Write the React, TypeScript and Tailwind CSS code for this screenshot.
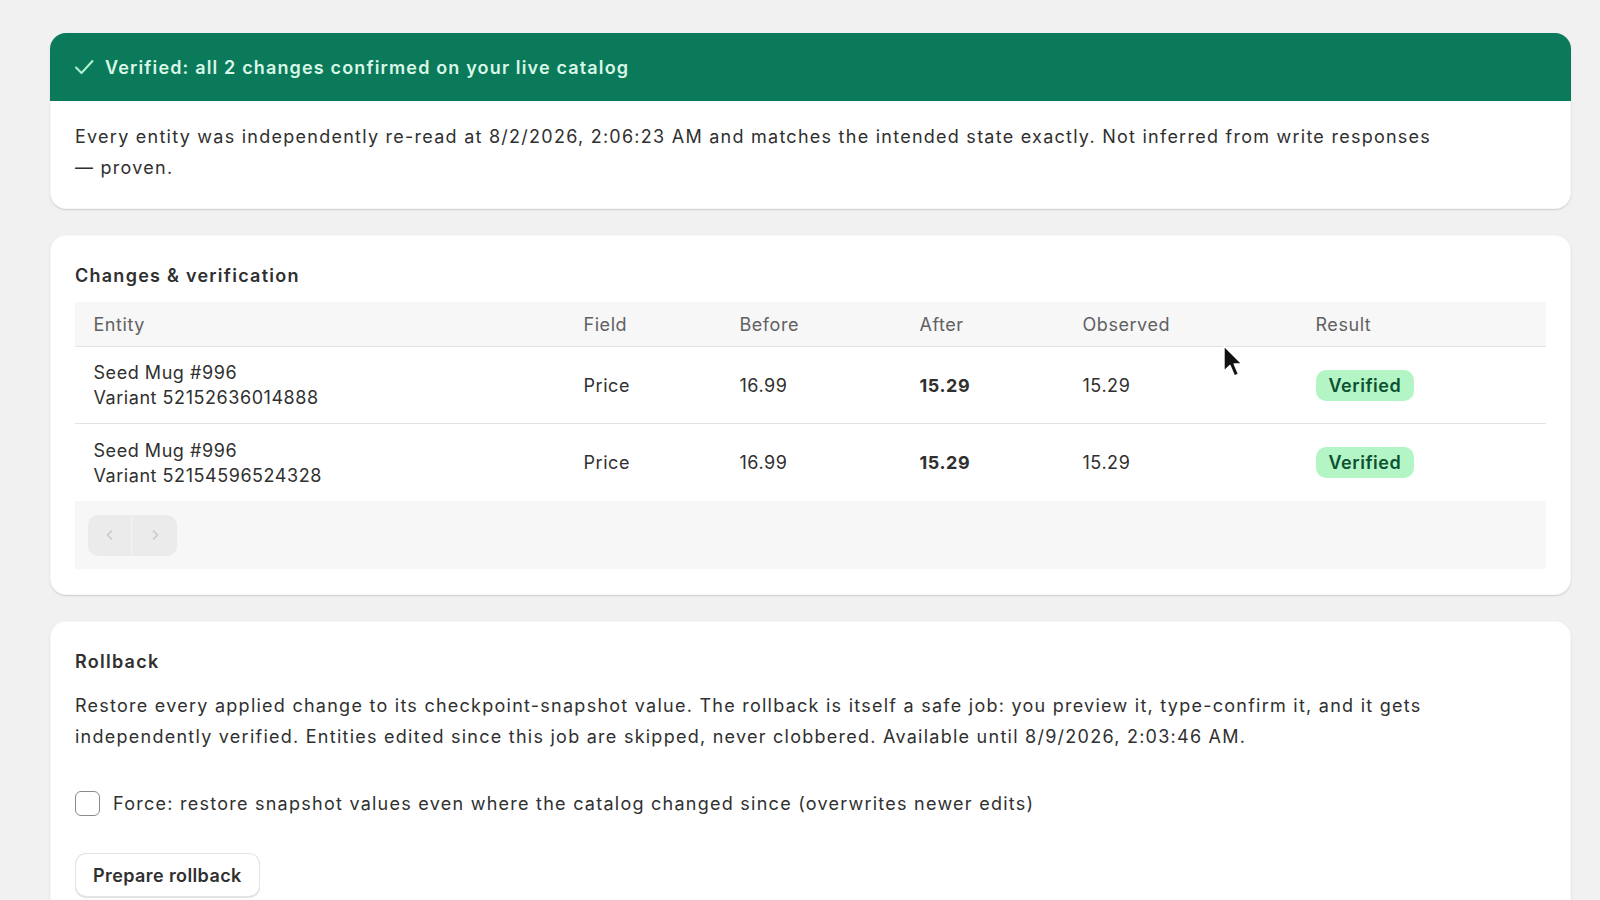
import React from "react";

type Change = {
  product: string;
  variant: string;
  field: string;
  before: string;
  after: string;
  observed: string;
};

const changes: Change[] = [
  { product: "Seed Mug #996", variant: "Variant 52152636014888", field: "Price", before: "16.99", after: "15.29", observed: "15.29" },
  { product: "Seed Mug #996", variant: "Variant 52154596524328", field: "Price", before: "16.99", after: "15.29", observed: "15.29" },
];

const cols = "grid grid-cols-[490px_156px_180px_163px_233px_1fr]";

function Card({ children, className = "" }: { children: React.ReactNode; className?: string }) {
  return (
    <div
      className={
        "rounded-[16px] bg-white shadow-[0_1px_0_rgba(26,26,26,0.09),0_1px_3px_rgba(26,26,26,0.08),inset_0_0_0_1px_rgba(0,0,0,0.03)] " +
        className
      }
    >
      {children}
    </div>
  );
}

function Pointer() {
  return (
    <svg
      className="pointer-events-none absolute left-[1222px] top-[345px]"
      width="22"
      height="34"
      viewBox="0 0 22 34"
    >
      <path
        d="M2 1 L2 26 L8 20.5 L12.5 31 L16.5 29.2 L12.2 19 L20 19 Z"
        fill="#111"
        stroke="#fff"
        strokeWidth="1.4"
        strokeLinejoin="round"
      />
    </svg>
  );
}

export default function App() {
  return (
    <div
      className="relative min-h-[900px] overflow-hidden bg-[#f1f1f1] pl-[50px] pr-[29px] pt-[33px] text-[18px] tracking-[1.25px] text-[#303030]"
      style={{ fontFamily: "Inter, 'Noto Sans', 'Liberation Sans', sans-serif" }}
    >
      <div className="flex flex-col gap-[26px]">
        {/* Verification banner */}
        <Card className="overflow-hidden">
          <div className="flex h-[68px] items-center gap-[10px] bg-[#0a7a5a] pl-[23px] text-[#d9f7e6]">
            <svg width="22" height="22" viewBox="0 0 22 22" fill="none">
              <path d="M3 11.5 L8.5 17 L19.5 5" stroke="#b5f3d0" strokeWidth="2" strokeLinecap="round" strokeLinejoin="round" />
            </svg>
            <span className="text-[18px] font-semibold leading-[31px] tracking-[1.15px]">
              Verified: all 2 changes confirmed on your live catalog
            </span>
          </div>
          <div className="px-[25px] pb-[26px] pt-[20px] leading-[31px]">
            Every entity was independently re-read at 8/2/2026, 2:06:23 AM and matches the intended state exactly. Not
            inferred from write responses
            <br />— proven.
          </div>
        </Card>

        {/* Changes table */}
        <Card className="px-[25px] pb-[26px] pt-[25px]">
          <h2 className="text-[18px] font-semibold leading-[31px]">Changes &amp; verification</h2>
          <div className="mt-[11px] overflow-hidden rounded-[2px] tracking-[0.55px]">
            <div className={cols + " h-[45px] items-center border-b border-[#e3e3e3] bg-[#f7f7f7] text-[#616161]"}>
              {["Entity", "Field", "Before", "After", "Observed", "Result"].map((h) => (
                <div key={h} className="pl-[18.5px]">
                  {h}
                </div>
              ))}
            </div>
            {changes.map((c, i) => (
              <div
                key={c.variant}
                className={
                  cols +
                  " h-[77px] items-center " +
                  (i < changes.length - 1 ? "border-b border-[#e3e3e3]" : "")
                }
              >
                <div className="pl-[18.5px] leading-[25px]">
                  <div>{c.product}</div>
                  <div>{c.variant}</div>
                </div>
                <div className="pl-[18.5px]">{c.field}</div>
                <div className="pl-[18.5px]">{c.before}</div>
                <div className="pl-[18.5px] font-bold">{c.after}</div>
                <div className="pl-[18.5px]">{c.observed}</div>
                <div className="pl-[18.5px]">
                  <span className="inline-flex h-[31px] items-center rounded-[10px] bg-[#b4f5c6] px-[13px] font-semibold text-[#0c5132]">
                    Verified
                  </span>
                </div>
              </div>
            ))}
            <div className="flex h-[68px] items-center bg-[#f7f7f7] pl-[13px]">
              <div className="flex h-[41px] overflow-hidden rounded-[10px] bg-[#ebebeb]">
                <button className="flex w-[44px] items-center justify-center border-r border-[#f3f3f3] text-[#c8c8c8]">
                  <svg width="14" height="14" viewBox="0 0 14 14" fill="none">
                    <path d="M8.5 3 L4.5 7 L8.5 11" stroke="currentColor" strokeWidth="1.6" strokeLinecap="round" strokeLinejoin="round" />
                  </svg>
                </button>
                <button className="flex w-[45px] items-center justify-center text-[#c8c8c8]">
                  <svg width="14" height="14" viewBox="0 0 14 14" fill="none">
                    <path d="M5.5 3 L9.5 7 L5.5 11" stroke="currentColor" strokeWidth="1.6" strokeLinecap="round" strokeLinejoin="round" />
                  </svg>
                </button>
              </div>
            </div>
          </div>
        </Card>

        {/* Rollback */}
        <Card className="px-[25px] pb-[30px] pt-[25px]">
          <h2 className="text-[18px] font-semibold leading-[31px]">Rollback</h2>
          <p className="mt-[13px] leading-[31px]">
            Restore every applied change to its checkpoint-snapshot value. The rollback is itself a safe job: you preview
            it, type-confirm it, and it gets
            <br />
            independently verified. Entities edited since this job are skipped, never clobbered. Available until
            8/9/2026, 2:03:46 AM.
          </p>
          <label className="mt-[36px] flex items-center gap-[13px] leading-[31px]">
            <span className="block h-[25px] w-[25px] rounded-[6px] border-[1.5px] border-[#8a8a8a] bg-white" />
            <span>Force: restore snapshot values even where the catalog changed since (overwrites newer edits)</span>
          </label>
          <button className="mt-[34px] flex h-[44px] items-center rounded-[11px] bg-white px-[18px] font-semibold tracking-[0.4px] text-[#303030] shadow-[0_1px_0_rgba(0,0,0,0.1),inset_0_0_0_1px_#e3e3e3,inset_0_-1px_0_#d4d4d4]">
            Prepare rollback
          </button>
        </Card>
      </div>
      <Pointer />
    </div>
  );
}
